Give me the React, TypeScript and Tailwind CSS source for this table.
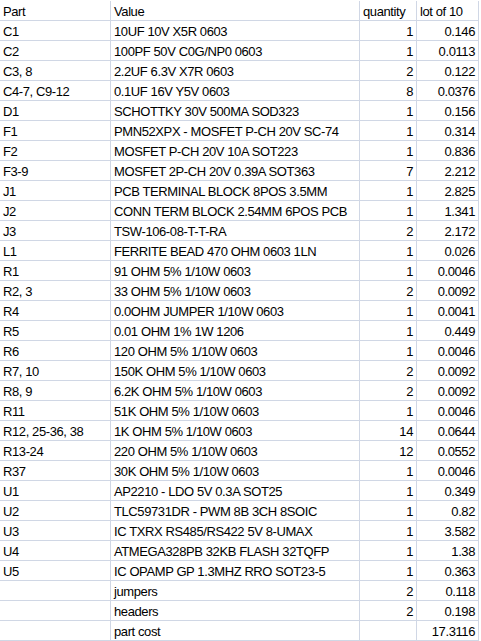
import React from "react";

const rows: [string, string, string, string][] = [
  ["C1", "10UF 10V X5R 0603", "1", "0.146"],
  ["C2", "100PF 50V C0G/NP0 0603", "1", "0.0113"],
  ["C3, 8", "2.2UF 6.3V X7R 0603", "2", "0.122"],
  ["C4-7, C9-12", "0.1UF 16V Y5V 0603", "8", "0.0376"],
  ["D1", "SCHOTTKY 30V 500MA SOD323", "1", "0.156"],
  ["F1", "PMN52XPX - MOSFET P-CH 20V SC-74", "1", "0.314"],
  ["F2", "MOSFET P-CH 20V 10A SOT223", "1", "0.836"],
  ["F3-9", "MOSFET 2P-CH 20V 0.39A SOT363", "7", "2.212"],
  ["J1", "PCB TERMINAL BLOCK 8POS 3.5MM", "1", "2.825"],
  ["J2", "CONN TERM BLOCK 2.54MM 6POS PCB", "1", "1.341"],
  ["J3", "TSW-106-08-T-T-RA", "2", "2.172"],
  ["L1", "FERRITE BEAD 470 OHM 0603 1LN", "1", "0.026"],
  ["R1", "91 OHM 5% 1/10W 0603", "1", "0.0046"],
  ["R2, 3", "33 OHM 5% 1/10W 0603", "2", "0.0092"],
  ["R4", "0.0OHM JUMPER 1/10W 0603", "1", "0.0041"],
  ["R5", "0.01 OHM 1% 1W 1206", "1", "0.449"],
  ["R6", "120 OHM 5% 1/10W 0603", "1", "0.0046"],
  ["R7, 10", "150K OHM 5% 1/10W 0603", "2", "0.0092"],
  ["R8, 9", "6.2K OHM 5% 1/10W 0603", "2", "0.0092"],
  ["R11", "51K OHM 5% 1/10W 0603", "1", "0.0046"],
  ["R12, 25-36, 38", "1K OHM 5% 1/10W 0603", "14", "0.0644"],
  ["R13-24", "220 OHM 5% 1/10W 0603", "12", "0.0552"],
  ["R37", "30K OHM 5% 1/10W 0603", "1", "0.0046"],
  ["U1", "AP2210 - LDO 5V 0.3A SOT25", "1", "0.349"],
  ["U2", "TLC59731DR - PWM 8B 3CH 8SOIC", "1", "0.82"],
  ["U3", "IC TXRX RS485/RS422 5V 8-UMAX", "1", "3.582"],
  ["U4", "ATMEGA328PB 32KB FLASH 32TQFP", "1", "1.38"],
  ["U5", "IC OPAMP GP 1.3MHZ RRO SOT23-5", "1", "0.363"],
  ["", "jumpers", "2", "0.118"],
  ["", "headers", "2", "0.198"],
  ["", "part cost", "", "17.3116"],
];

const cell =
  "h-[20px] border-r border-b border-[#d0d7e5] px-[3px] leading-[21px] whitespace-nowrap overflow-hidden";

export default function App() {
  return (
    <div
      className="w-[481px] h-[641px] bg-white pt-px text-black text-[13px] tracking-[-0.4px]"
      style={{ fontFamily: '"Liberation Sans", Arial, sans-serif' }}
    >
      <div className="grid grid-cols-[111px_249px_57px_62px]">
        <div className={cell}>Part</div>
        <div className={cell}>Value</div>
        <div className={cell}>quantity</div>
        <div className={cell}>lot of 10</div>
        {rows.map((r, i) => (
          <React.Fragment key={i}>
            <div className={cell}>{r[0]}</div>
            <div className={cell}>{r[1]}</div>
            <div className={cell + " text-right"}>{r[2]}</div>
            <div className={cell + " text-right"}>{r[3]}</div>
          </React.Fragment>
        ))}
      </div>
    </div>
  );
}
